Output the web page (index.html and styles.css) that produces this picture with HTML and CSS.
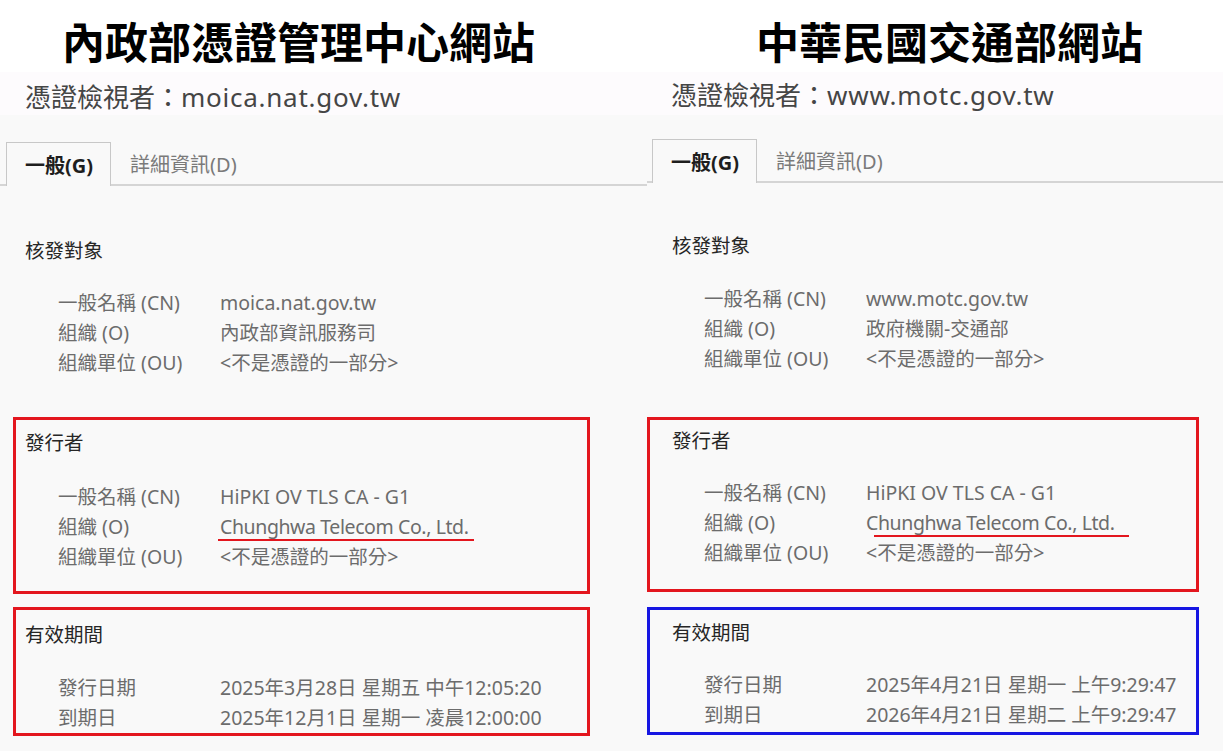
FILE: index.html
```html
<!DOCTYPE html>
<html lang="zh-Hant">

<head>
  <meta charset="UTF-8">
  <meta name="viewport" content="width=device-width, initial-scale=1.0">
  <title>憑證比較</title>
  <link rel="stylesheet" href="styles.css">
</head>

<body>
  <div class="compare">

    <!-- 左邊：內政部憑證管理中心 -->
    <section class="panel panel-moi">
      <h1 class="site-title">內政部憑證管理中心網站</h1>
      <div class="viewer-head">憑證檢視者：<span class="host">moica.nat.gov.tw</span></div>
      <div class="tabs">
        <span class="tab active">一般(G)</span>
        <span class="tab">詳細資訊(D)</span>
      </div>

      <div class="cert">
        <div class="group subject">
          <h2>核發對象</h2>
          <dl class="fields">
            <dt>一般名稱 (CN)</dt><dd>moica.nat.gov.tw</dd>
            <dt>組織 (O)</dt><dd>內政部資訊服務司</dd>
            <dt>組織單位 (OU)</dt><dd>&lt;不是憑證的一部分&gt;</dd>
          </dl>
        </div>

        <div class="group issuer mark-red">
          <h2>發行者</h2>
          <dl class="fields">
            <dt>一般名稱 (CN)</dt><dd>HiPKI OV TLS CA - G1</dd>
            <dt>組織 (O)</dt><dd><span class="hl">Chunghwa Telecom Co., Ltd.</span></dd>
            <dt>組織單位 (OU)</dt><dd>&lt;不是憑證的一部分&gt;</dd>
          </dl>
        </div>

        <div class="group validity mark-red">
          <h2>有效期間</h2>
          <dl class="fields">
            <dt>發行日期</dt><dd>2025年3月28日 星期五 中午12:05:20</dd>
            <dt>到期日</dt><dd>2025年12月1日 星期一 凌晨12:00:00</dd>
          </dl>
        </div>
      </div>
    </section>

    <!-- 右邊：交通部 -->
    <section class="panel panel-motc">
      <h1 class="site-title">中華民國交通部網站</h1>
      <div class="viewer-head">憑證檢視者：<span class="host">www.motc.gov.tw</span></div>
      <div class="tabs">
        <span class="tab active">一般(G)</span>
        <span class="tab">詳細資訊(D)</span>
      </div>

      <div class="cert">
        <div class="group subject">
          <h2>核發對象</h2>
          <dl class="fields">
            <dt>一般名稱 (CN)</dt><dd>www.motc.gov.tw</dd>
            <dt>組織 (O)</dt><dd>政府機關-交通部</dd>
            <dt>組織單位 (OU)</dt><dd>&lt;不是憑證的一部分&gt;</dd>
          </dl>
        </div>

        <div class="group issuer mark-red">
          <h2>發行者</h2>
          <dl class="fields">
            <dt>一般名稱 (CN)</dt><dd>HiPKI OV TLS CA - G1</dd>
            <dt>組織 (O)</dt><dd><span class="hl">Chunghwa Telecom Co., Ltd.</span></dd>
            <dt>組織單位 (OU)</dt><dd>&lt;不是憑證的一部分&gt;</dd>
          </dl>
        </div>

        <div class="group validity mark-blue">
          <h2>有效期間</h2>
          <dl class="fields">
            <dt>發行日期</dt><dd>2025年4月21日 星期一 上午9:29:47</dd>
            <dt>到期日</dt><dd>2026年4月21日 星期二 上午9:29:47</dd>
          </dl>
        </div>
      </div>
    </section>

  </div>
</body>

</html>
```

FILE: styles.css
```css
/* 憑證比較頁 */
body {
  margin: 0;
  background-color: #f9f9f9;
  font-family: "Noto Sans", "Noto Sans CJK TC", sans-serif;
  color: #6c6c6c;
}

.compare {
  display: flex;
  height: 751px;
  overflow: hidden;
}

.panel {
  box-sizing: border-box;
}

.panel-moi {
  width: 647px;
}

.panel-motc {
  flex: 1;
}

/* 標題 */
.site-title {
  margin: 0;
  height: 72px;
  box-sizing: border-box;
  padding-top: 19px;
  background-color: #fff;
  color: #000;
  font-family: "Noto Sans CJK TC", sans-serif;
  font-size: 43px;
  font-weight: 700;
  line-height: 1;
  white-space: nowrap;
}

.panel-moi .site-title {
  padding-left: 62px;
}

.panel-motc .site-title {
  padding-left: 109px;
}

/* 憑證檢視者 */
.viewer-head {
  height: 43px;
  box-sizing: border-box;
  padding-top: 7px;
  background-color: #fdfbfd;
  color: #454545;
  font-size: 26px;
  line-height: 36px;
  white-space: nowrap;
}

.viewer-head .host {
  letter-spacing: 0.75px;
}

.panel-moi .viewer-head {
  padding-left: 25px;
}

.panel-motc .viewer-head {
  padding-left: 24px;
  padding-top: 5px;
}

/* 分頁 */
.tabs {
  display: flex;
  align-items: flex-end;
  border-bottom: 2px solid #d5d5d5;
  font-size: 20px;
}

.panel-moi .tabs {
  margin-top: 27px;
  padding-left: 6px;
}

.panel-motc .tabs {
  margin-top: 24px;
  padding-left: 5px;
}

.tab {
  padding: 4px 0 0;
  line-height: 38px;
  color: #7a7a7a;
  margin-left: 19px;
}

.tab.active {
  margin-left: 0;
  padding: 4px 17px 1px 18px;
  margin-bottom: -2px;
  border: 1px solid #c8c8c8;
  border-bottom: none;
  background-color: #f9f9f9;
  color: #1e1e1e;
  font-weight: 700;
}

/* 憑證內容 */
.group {
  box-sizing: border-box;
  border: 3px solid transparent;
}

.group h2 {
  margin: 0;
  font-size: 19.5px;
  font-weight: 400;
  line-height: 30px;
  color: #262626;
}

.fields {
  display: grid;
  grid-template-columns: 162px 1fr;
  margin: 0;
  font-size: 19.5px;
  line-height: 30px;
  white-space: nowrap;
}

.fields dt,
.fields dd {
  margin: 0;
}

.mark-red {
  border-color: #e3161e;
}

.mark-blue {
  border-color: #1616e2;
}

.hl {
  position: relative;
  letter-spacing: -0.4px;
}

.hl::after {
  content: "";
  position: absolute;
  bottom: -1px;
  height: 2px;
  background-color: #e3161e;
}

/* 左邊位置 */
.panel-moi .cert {
  padding: 47px 0 0 13px;
}

.panel-moi .group {
  width: 577px;
  padding-left: 9px;
}

.panel-moi .fields {
  padding-left: 33px;
  margin-top: 22px;
}

.panel-moi .issuer {
  margin-top: 36px;
  padding-top: 8px;
  padding-bottom: 19px;
}

.panel-moi .issuer .fields {
  margin-top: 24px;
}

.panel-moi .validity {
  margin-top: 13px;
  padding-top: 10px;
}

.panel-moi .validity .fields {
  margin-top: 23px;
}

.panel-moi .hl::after {
  left: -2px;
  right: -5px;
}

/* 右邊位置 */
.panel-motc .cert {
  padding-top: 45px;
}

.panel-motc .group {
  width: 552px;
  padding-left: 22px;
}

.panel-motc .fields {
  padding-left: 32px;
  margin-top: 23px;
}

.panel-motc .issuer {
  margin-top: 40px;
  padding-top: 6px;
  padding-bottom: 21px;
}

.panel-motc .issuer .fields {
  margin-top: 22px;
}

.panel-motc .validity {
  margin-top: 15px;
  padding-top: 8px;
  padding-bottom: 2px;
}

.panel-motc .validity .fields {
  margin-top: 22px;
}

.panel-motc .hl::after {
  left: 8px;
  right: -14px;
}
```
